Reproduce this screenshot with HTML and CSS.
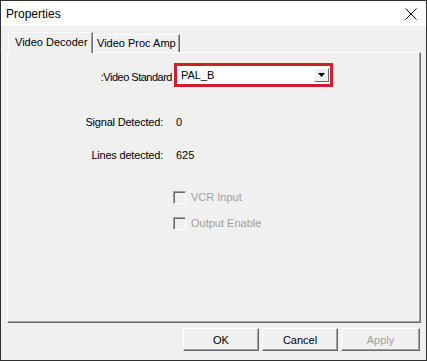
FILE: index.html
```html
<!DOCTYPE html>
<html lang="en">
<head>
    <meta charset="UTF-8">
    <title>Properties</title>
    <link rel="stylesheet" href="styles.css">
</head>
<body>
    <div class="window">
        <div class="titlebar">
            <span class="title">Properties</span>
            <svg class="close" width="12" height="12" viewBox="0 0 12 12">
                <path d="M0.5 0.5 L11.5 11.5 M11.5 0.5 L0.5 11.5" stroke="#000" stroke-width="1" fill="none"/>
            </svg>
        </div>

        <div class="dialog">
            <div class="tabs">
                <div class="tab active">Video Decoder</div>
                <div class="tab">Video Proc Amp</div>
            </div>

            <div class="panel">
                <div class="row standard-row">
                    <div class="label std-label">:Video Standard</div>
                    <div class="combo">
                        <span class="combo-text">PAL_B</span>
                        <span class="combo-btn">
                            <svg width="7" height="4" viewBox="0 0 7 4"><path d="M0 0 H7 L3.5 4 Z" fill="#000"/></svg>
                        </span>
                    </div>
                </div>

                <div class="row info-row first-info">
                    <div class="label info-label">Signal Detected:</div>
                    <div class="value">0</div>
                </div>
                <div class="row info-row">
                    <div class="label info-label">Lines detected:</div>
                    <div class="value">625</div>
                </div>

                <div class="check first-check">
                    <span class="box"></span>
                    <span class="check-text">VCR Input</span>
                </div>
                <div class="check">
                    <span class="box"></span>
                    <span class="check-text">Output Enable</span>
                </div>
            </div>

            <div class="buttons">
                <button class="btn">OK</button>
                <button class="btn">Cancel</button>
                <button class="btn disabled">Apply</button>
            </div>
        </div>
    </div>
</body>
</html>
```

FILE: styles.css
```css
body {
    margin: 0;
    font-family: "Liberation Sans", Arial, sans-serif;
    font-size: 11px;
    color: #000;
    background: #f0f0f0;
}
.window {
    width: 427px;
    height: 361px;
    box-sizing: border-box;
    border: 1px solid #2f2f2f;
    background: #f0f0f0;
    display: flex;
    flex-direction: column;
}
.titlebar {
    height: 25px;
    background: #fff;
    display: flex;
    align-items: center;
    justify-content: space-between;
    padding: 0 9px 0 5px;
}
.title {
    font-size: 12px;
}
.close {
    display: block;
    margin-top: 1px;
}
.dialog {
    padding: 0 5px 0 6px;
    display: flex;
    flex-direction: column;
}
.tabs {
    display: flex;
    height: 26px;
    align-items: flex-end;
    padding-left: 2px;
}
.tab {
    width: 87px;
    height: 18px;
    line-height: 17px;
    padding: 0 0 0 3px;
    border-top: 1px solid #fff;
    border-left: 1px solid #fff;
    border-right: 1px solid #696969;
    box-shadow: inset -1px 0 #a0a0a0;
    box-sizing: border-box;
    white-space: nowrap;
}
.tab.active {
    width: 85px;
    height: 21px;
    line-height: 19px;
    padding-left: 6px;
    margin-left: -1px;
    margin-right: 0;
    position: relative;
    z-index: 1;
    background: #f0f0f0;
    margin-bottom: -1px;
}
.panel {
    height: 271px;
    box-sizing: border-box;
    border-top: 1px solid #fff;
    border-left: 1px solid #fff;
    border-right: 1px solid #696969;
    border-bottom: 1px solid #696969;
    box-shadow: inset -1px -1px #a0a0a0;
    padding-top: 10px;
}
.row {
    display: flex;
    align-items: flex-start;
}
.label {
    text-align: right;
    line-height: 13px;
}
.std-label {
    width: 164px;
    padding-top: 8px;
    margin-right: 2px;
    letter-spacing: -0.5px;
}
.combo {
    width: 159px;
    height: 24px;
    box-sizing: border-box;
    border: 3px solid #c9222c;
    background: #fff;
    display: flex;
    align-items: center;
    justify-content: space-between;
    padding: 0 1px 0 4px;
}
.combo-text {
    line-height: 13px;
}
.combo-btn {
    width: 15px;
    height: 14px;
    box-sizing: border-box;
    background: #f0f0f0;
    border-top: 1px solid #fff;
    border-left: 1px solid #fff;
    border-right: 1px solid #696969;
    border-bottom: 1px solid #696969;
    display: flex;
    align-items: center;
    justify-content: center;
}
.combo-btn svg {
    display: block;
}
.info-row {
    margin-top: 20px;
}
.first-info {
    margin-top: 29px;
}
.info-label {
    width: 155px;
    margin-right: 13px;
    letter-spacing: -0.2px;
}
.value {
    line-height: 13px;
}
.check {
    display: flex;
    align-items: center;
    margin-left: 165px;
    margin-top: 13px;
    height: 13px;
}
.first-check {
    margin-top: 29px;
}
.box {
    width: 13px;
    height: 13px;
    box-sizing: border-box;
    border-top: 1px solid #a0a0a0;
    border-left: 1px solid #a0a0a0;
    border-right: 1px solid #fff;
    border-bottom: 1px solid #fff;
    box-shadow: inset 1px 1px #696969;
    background: #f0f0f0;
    margin-right: 5px;
}
.check-text {
    color: #a0a0a0;
    line-height: 13px;
}
.buttons {
    display: flex;
    justify-content: flex-end;
    gap: 3px;
    margin-top: 5px;
    padding-right: 1px;
}
.btn {
    width: 76px;
    height: 23px;
    font-family: "Liberation Sans", Arial, sans-serif;
    font-size: 11px;
    color: #000;
    background: #f0f0f0;
    border-top: 1px solid #fff;
    border-left: 1px solid #fff;
    border-right: 1px solid #696969;
    border-bottom: 1px solid #696969;
    box-shadow: inset -1px -1px #a0a0a0;
    padding: 0;
}
.btn.disabled {
    width: 79px;
    color: #a0a0a0;
}
```
